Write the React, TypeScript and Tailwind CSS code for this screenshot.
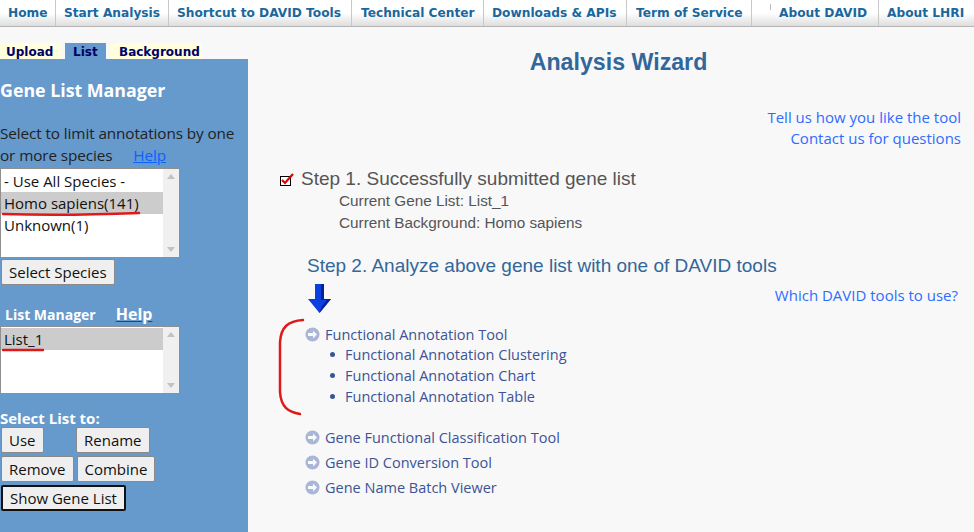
import React from 'react';

const navItems = [
  { label: 'Home', w: 'w-[56px]', pl: 'pl-[8px]' },
  { label: 'Start Analysis', w: 'w-[113px]', pl: 'pl-[8px]' },
  { label: 'Shortcut to DAVID Tools', w: 'w-[183px]', pl: 'pl-[8px]' },
  { label: 'Technical Center', w: 'w-[132px]', pl: 'pl-[9px]' },
  { label: 'Downloads & APIs', w: 'w-[143px]', pl: 'pl-[8px]' },
  { label: 'Term of Service', w: 'w-[125px]', pl: 'pl-[9px]' },
  { label: 'About DAVID', w: 'w-[127px]', pl: 'pl-[27px]' },
  { label: 'About LHRI', w: 'flex-1', pl: 'pl-[8px]' },
];

const CheckIcon = () => (
  <svg width="14" height="13" viewBox="0 0 14 13">
    <rect x="0.5" y="3.5" width="10" height="9" fill="white" stroke="black" />
    <path d="M2 7 L5 10 L13 1" fill="none" stroke="#e00000" strokeWidth="2.2" />
  </svg>
);

const CircleArrow = () => (
  <svg width="15" height="15" viewBox="0 0 15 15">
    <circle cx="7.5" cy="7.5" r="7" fill="#a9b6d6" />
    <path d="M3 6 H8 V3.5 L12 7.5 L8 11.5 V9 H3 Z" fill="#fafafa" />
  </svg>
);

const DownArrow = () => (
  <svg width="24" height="30" viewBox="0 0 24 30">
    <path d="M7 0 H16 V15 H23 L11.5 29 L0 15 H7 Z" fill="#0b3fe0" />
    <path d="M13 0 H16 V15 H23 L11.5 29 L14 22 L19 16 H13 Z" fill="#05209a" />
  </svg>
);

const ScrollBar = () => (
  <div className="w-[16px] bg-[#f0f0f0] flex flex-col justify-between items-center py-[5px]">
    <svg width="8" height="5" viewBox="0 0 8 5"><path d="M0 5 L4 0 L8 5 Z" fill="#c2c2c2" /></svg>
    <svg width="8" height="5" viewBox="0 0 8 5"><path d="M0 0 L4 5 L8 0 Z" fill="#c2c2c2" /></svg>
  </div>
);

const Btn = ({ children, strong }: { children: React.ReactNode; strong?: boolean }) => (
  <button
    className={
      'h-[26px] px-[7px] bg-[#efefef] rounded-[2px] text-[15px] text-[#111] leading-none ' +
      (strong ? 'border-2 border-[#111]' : 'border border-[#8a8a8a]')
    }
  >
    {children}
  </button>
);

export default function App() {
  const ui = { fontFamily: '"Open Sans", "Noto Sans", sans-serif' };
  const arial = { fontFamily: '"Liberation Sans", Arial, sans-serif' };
  const verdana = { fontFamily: '"DejaVu Sans", Verdana, sans-serif' };

  return (
    <div className="w-[974px] h-[532px] overflow-hidden bg-[#f8f8f8] flex flex-col" style={ui}>
      {/* top nav */}
      <div className="h-[27px] flex bg-gradient-to-b from-white via-white to-[#dedede] border-b border-[#b5b5b5]" style={verdana}>
        {navItems.map((n, i) => (
          <div
            key={n.label}
            className={`${n.w} ${n.pl} relative flex items-center text-[12.2px] font-bold text-[#19679e] ${i < navItems.length - 1 ? 'border-r border-[#c8c8c8]' : ''}`}
          >
            {n.label}
            {i === 5 && <span className="absolute right-[-20px] top-[4px] w-px h-[6px] bg-[#bbb]" />}
          </div>
        ))}
      </div>

      <div className="flex flex-1 min-h-0">
        {/* left column */}
        <div className="w-[248px] flex flex-col">
          <div className="mt-[16px] flex items-end border-b-2 border-[#6699cc] text-[12px] font-bold text-[#000066]" style={verdana}>
            <div className="bg-[#ffffdd] h-[16px] pt-[2px] w-[61px] pl-[6px] leading-[14px]">Upload</div>
            <div className="bg-[#6699cc] h-[16px] pt-[2px] ml-[4px] w-[41px] pl-[8px] leading-[14px]">List</div>
            <div className="bg-[#ffffdd] h-[16px] pt-[2px] ml-[4px] w-[92px] pl-[9px] leading-[14px]">Background</div>
          </div>

          <div className="flex-1 bg-[#6699cc] flex flex-col">
            <div className="mt-[18px] text-[17.8px] font-bold text-white leading-[22px]">Gene List Manager</div>
            <div className="mt-[21px] text-[15.3px] text-[#222] leading-[22px] tracking-[-0.1px]">
              Select to limit annotations by one<br />
              or more species <span className="ml-[17px] text-[#0a62ff] underline">Help</span>
            </div>

            <div className="mt-[2px] ml-0 w-[180px] h-[90px] bg-white border border-[#8f8f8f] flex">
              <div className="flex-1 pt-[1px] text-[15px] leading-[22px] text-[#111]">
                <div className="pl-[3px]">- Use All Species -</div>
                <div className="pl-[3px] bg-[#cccccc] relative">
                  Homo sapiens(141)
                  <svg className="absolute left-[1px] top-[19px]" width="140" height="6" viewBox="0 0 140 6">
                    <path d="M1 3 Q60 5 137 2" fill="none" stroke="#e01818" strokeWidth="2.5" strokeLinecap="round" />
                  </svg>
                </div>
                <div className="pl-[3px]">Unknown(1)</div>
              </div>
              <ScrollBar />
            </div>

            <div className="mt-[1px] ml-[1px]">
              <Btn>Select Species</Btn>
            </div>

            <div className="mt-[20px] ml-[5px] flex items-center h-[18px]">
              <span className="text-[14px] font-bold text-white">List Manager</span>
              <span className="ml-[20px] text-[16px] font-bold text-white underline decoration-[#2233ee]">Help</span>
            </div>

            <div className="mt-[3px] w-[180px] h-[68px] bg-white border border-[#8f8f8f] flex">
              <div className="flex-1 pt-[1px] text-[15px] leading-[22px] text-[#111]">
                <div className="pl-[3px] bg-[#cccccc] relative">
                  List_1
                  <svg className="absolute left-[1px] top-[19px]" width="44" height="6" viewBox="0 0 44 6">
                    <path d="M1 3 L41 3" fill="none" stroke="#e01818" strokeWidth="2.5" strokeLinecap="round" />
                  </svg>
                </div>
              </div>
              <ScrollBar />
            </div>

            <div className="mt-[15px] text-[15px] font-bold text-white leading-[18px]">Select List to:</div>
            <div className="ml-[1px] flex flex-col gap-[3px]">
              <div className="flex">
                <div className="w-[75px]"><Btn>Use</Btn></div>
                <Btn>Rename</Btn>
              </div>
              <div className="flex gap-[3px]">
                <Btn>Remove</Btn>
                <Btn>Combine</Btn>
              </div>
              <div>
                <Btn strong>Show Gene List</Btn>
              </div>
            </div>
          </div>
        </div>

        {/* main */}
        <div className="flex-1 relative flex flex-col pr-[13px]">
          <div className="mt-[22px] text-center text-[23.2px] font-bold text-[#336699] leading-[26px] pl-[28px]" style={arial}>
            Analysis Wizard
          </div>

          <div className="mt-[32px] flex flex-col items-end text-[15px] leading-[21px] text-[#2e6cff]">
            <span>Tell us how you like the tool</span>
            <span>Contact us for questions</span>
          </div>

          <div className="mt-[19px] pl-[32px]" style={arial}>
            <div className="flex items-center gap-[7px] h-[22px]">
              <CheckIcon />
              <span className="text-[19px] text-[#555]">Step 1. Successfully submitted gene list</span>
            </div>
            <div className="pl-[59px] text-[15.3px] text-[#555] leading-[22px]">
              <div>Current Gene List: List_1</div>
              <div>Current Background: Homo sapiens</div>
            </div>

            <div className="mt-[21px] pl-[27px] text-[19px] text-[#336699] leading-[22px]">
              Step 2. Analyze above gene list with one of DAVID tools
            </div>
          </div>

          <div className="mt-[7px] pl-[60px] flex justify-between items-start">
            <DownArrow />
            <span className="mt-[1px] mr-[3px] text-[15px] text-[#2e6cff] leading-[21px]">Which DAVID tools to use?</span>
          </div>

          <div className="mt-[11px] pl-[57px] text-[14.5px] text-[#3b5397]">
            <div className="flex items-center gap-[5px] h-[19px]">
              <CircleArrow />
              <span>Functional Annotation Tool</span>
            </div>
            <div className="pl-[22px] leading-[21px]">
              {['Functional Annotation Clustering', 'Functional Annotation Chart', 'Functional Annotation Table'].map((t) => (
                <div key={t} className="flex items-center">
                  <span className="w-[5px] h-[5px] rounded-full bg-[#3b5397] mr-[10px] ml-[3px]" />
                  {t}
                </div>
              ))}
            </div>
            <div className="mt-[20px] flex flex-col gap-[4px]">
              {['Gene Functional Classification Tool', 'Gene ID Conversion Tool', 'Gene Name Batch Viewer'].map((t) => (
                <div key={t} className="flex items-center gap-[5px] h-[21px]">
                  <CircleArrow />
                  <span>{t}</span>
                </div>
              ))}
            </div>
          </div>

          {/* hand-drawn red bracket */}
          <svg className="absolute left-[28px] top-[290px]" width="30" height="100" viewBox="0 0 30 100">
            <path d="M27 3 C12 4 5 10 4 25 L4 75 C5 90 12 95 24 97" fill="none" stroke="#e01818" strokeWidth="2.5" strokeLinecap="round" />
          </svg>
        </div>
      </div>
    </div>
  );
}
